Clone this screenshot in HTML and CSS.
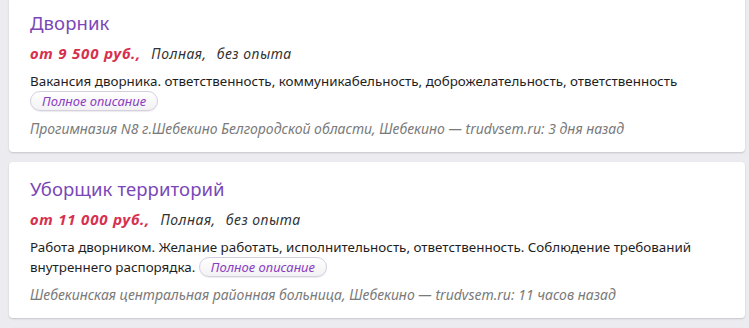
FILE: index.html
```html
<!DOCTYPE html>
<html lang="ru">
<head>
  <meta charset="UTF-8" />
  <title>Вакансии</title>
  <link rel="stylesheet" href="styles.css">
</head>
<body>
  <div class="list">
    <div class="vac">
      <div class="vac-title">Дворник</div>
      <div class="vac-meta"><span class="salary">от 9 500 руб.,</span> <span class="cond">Полная,</span> <span class="cond">без опыта</span></div>
      <div class="vac-desc">Вакансия дворника. ответственность, коммуникабельность, доброжелательность, ответственность <span class="more">Полное описание</span></div>
      <div class="vac-src">Прогимназия N8 г.Шебекино Белгородской области, Шебекино — trudvsem.ru: 3 дня назад</div>
    </div>

    <div class="vac">
      <div class="vac-title">Уборщик территорий</div>
      <div class="vac-meta"><span class="salary">от 11 000 руб.,</span> <span class="cond">Полная,</span> <span class="cond">без опыта</span></div>
      <div class="vac-desc">Работа дворником. Желание работать, исполнительность, ответственность. Соблюдение требований внутреннего распорядка. <span class="more">Полное описание</span></div>
      <div class="vac-src">Шебекинская центральная районная больница, Шебекино — trudvsem.ru: 11 часов назад</div>
    </div>

    <div class="vac vac-next"></div>
  </div>
</body>
</html>
```
FILE: styles.css
```css
body  { margin: 0; background: #ebebf0; font-family: "Noto Sans", "Open Sans", sans-serif; color: #222; overflow: hidden; }
.list { display: flex; flex-direction: column; gap: 10px; margin: -4px 4px 0 9px; }

.vac  {
  background: #fff; border-radius: 4px; padding: 14px 21px 13px;
  box-shadow: 0 1px 2px rgba(0,0,0,.16);
}
.vac-next  { height: 40px; }
.vac-title { font-size: 18.5px; line-height: 26px; color: #7a47b8; letter-spacing: .1px; }
.vac-meta  { margin-top: 7px; font-size: 14px; line-height: 20px; font-style: italic; color: #333; letter-spacing: .5px; }
.salary    { font-size: 15px; font-weight: bold; color: #d7304e; margin-right: 6px; letter-spacing: .8px; }
.cond      { margin-right: 6px; }
.vac-desc  { margin-top: 7px; font-size: 13.4px; line-height: 20px; color: #1e1e1e; }
.more {
  display: inline-block; padding: 0 11px; line-height: 18px; font-size: 13px;
  font-style: italic; color: #8a3cc2; border: 1px solid #d6cfe0; border-radius: 11px;
  background: linear-gradient(#fff, #f2f2f4); box-shadow: 0 1px 1px rgba(0,0,0,.08);
  vertical-align: top; cursor: pointer;
}
.vac-src   { margin-top: 8px; font-size: 14px; line-height: 20px; font-style: italic; color: #7a7a7a; }
```
